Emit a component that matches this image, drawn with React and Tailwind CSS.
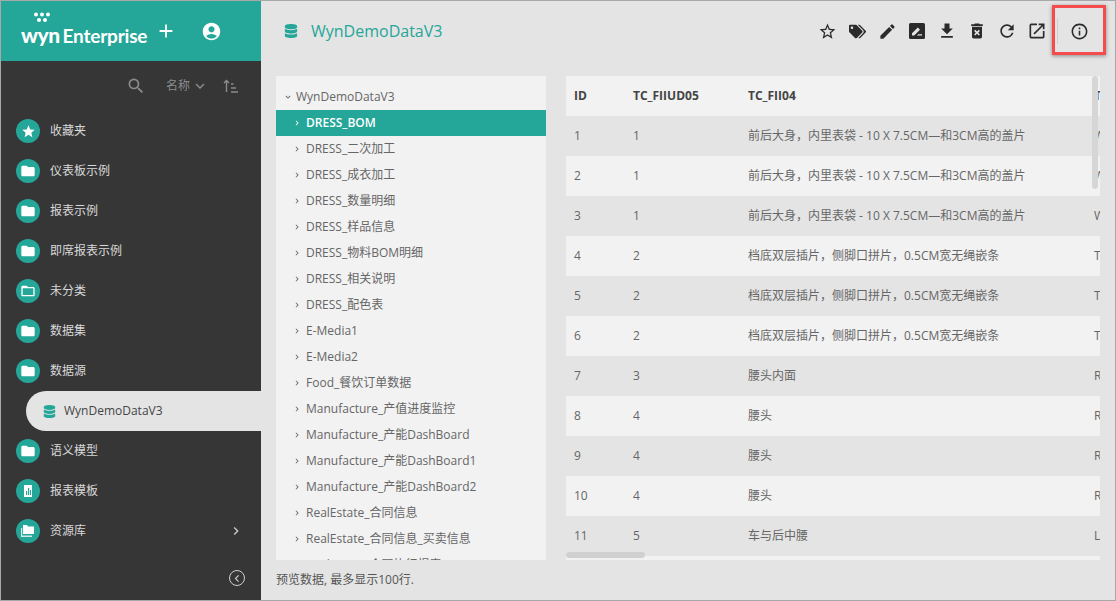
import { MdAdd, MdAccountCircle, MdSearch, MdKeyboardArrowDown, MdKeyboardArrowRight, MdStar, MdFolder, MdFolderOpen, MdStarBorder, MdEdit, MdFileDownload, MdDeleteForever, MdRefresh, MdOpenInNew, MdInfoOutline, MdChevronLeft } from 'react-icons/md';
import { FaDatabase, FaTags } from 'react-icons/fa';

const font = { fontFamily: '"Open Sans", "Noto Sans CJK SC", sans-serif' };

const ReportIcon = () => (
  <svg width="14" height="14" viewBox="0 0 14 14" fill="#fff">
    <path d="M3 1h8v12H3z" />
    <path d="M5 7h1.2v4H5zM7 4h1.2v7H7zM9 6h1v5H9z" fill="#24a698" />
  </svg>
);

const LibIcon = () => (
  <svg width="16" height="14" viewBox="0 0 16 14" fill="#fff">
    <path d="M3 1h4l1 1.5h6V10H3z" />
    <path d="M1 4h1.2v7.5H12V13H1z" opacity="0.8" />
  </svg>
);

const navTop = [
  ['收藏夹', <MdStar size={15} color="#fff" />],
  ['仪表板示例', <MdFolder size={16} color="#fff" />],
  ['报表示例', <MdFolder size={16} color="#fff" />],
  ['即席报表示例', <MdFolder size={16} color="#fff" />],
  ['未分类', <MdFolderOpen size={16} color="#fff" />],
  ['数据集', <MdFolder size={16} color="#fff" />],
  ['数据源', <MdFolder size={16} color="#fff" />],
];

const navBottom = [
  ['语义模型', <MdFolder size={16} color="#fff" />],
  ['报表模板', <ReportIcon />],
  ['资源库', <LibIcon />, true],
];

const tree = [
  'DRESS_BOM', 'DRESS_二次加工', 'DRESS_成衣加工', 'DRESS_数量明细', 'DRESS_样品信息',
  'DRESS_物料BOM明细', 'DRESS_相关说明', 'DRESS_配色表', 'E-Media1', 'E-Media2',
  'Food_餐饮订单数据', 'Manufacture_产值进度监控', 'Manufacture_产能DashBoard',
  'Manufacture_产能DashBoard1', 'Manufacture_产能DashBoard2', 'RealEstate_合同信息',
  'RealEstate_合同信息_买卖信息', 'RealEstate_合同执行报表',
];

const d1 = '前后大身，内里表袋 - 10 X 7.5CM—和3CM高的盖片';
const d2 = '档底双层插片，侧脚口拼片，0.5CM宽无绳嵌条';
const rows = [
  [1, 1, d1, 'W'], [2, 1, d1, 'W'], [3, 1, d1, 'W'],
  [4, 2, d2, 'T'], [5, 2, d2, 'T'], [6, 2, d2, 'T'],
  [7, 3, '腰头内面', 'R'], [8, 4, '腰头', 'R'], [9, 4, '腰头', 'R'], [10, 4, '腰头', 'R'],
  [11, 5, '车与后中腰', 'L'],
];

const NavItem = ({ label, icon, more }) => (
  <div className="h-10 flex items-center pl-[15px] pr-[17px] shrink-0">
    <span className="w-6 h-6 rounded-full bg-[#24a698] flex items-center justify-center shrink-0">{icon}</span>
    <span className="ml-[10px] text-xs text-[#d8d8d8] flex-1">{label}</span>
    {more && <MdKeyboardArrowRight size={16} color="#ccc" />}
  </div>
);

const Sidebar = () => (
  <div className="w-[260px] shrink-0 bg-[#363636] flex flex-col">
    <div className="h-[60px] bg-[#24a698] flex items-center pl-5 pr-[17px] shrink-0">
      <div className="relative w-[121px] h-[40px] text-white">
        <svg className="absolute left-[12px] top-[1px]" width="20" height="12" viewBox="0 0 20 12" fill="#fff">
          <circle cx="3" cy="2.5" r="2" /><circle cx="9" cy="2.5" r="2" /><circle cx="15" cy="2.5" r="2" />
          <circle cx="6" cy="8" r="2" /><circle cx="12" cy="8" r="2" />
        </svg>
        <div className="absolute left-0 top-[12px] flex items-baseline leading-[24px] whitespace-nowrap" style={{ fontFamily: 'Lato, sans-serif' }}>
          <span className="text-[21px] font-black tracking-[-0.5px]">wyn</span>
          <span className="ml-[3px] text-[19px] font-bold tracking-[-0.2px]">Enterprise</span>
        </div>
      </div>
      <MdAdd size={22} color="#fff" className="ml-[13px]" />
      <MdAccountCircle size={21} color="#fff" className="ml-[24px]" />
    </div>
    <div className="h-[50px] flex items-center justify-end pr-[22px] text-[#8b8b8b] shrink-0">
      <MdSearch size={20} />
      <span className="ml-[20px] text-xs">名称</span>
      <MdKeyboardArrowDown size={18} className="ml-[1px]" />
      <svg className="ml-[14px]" width="16" height="14" viewBox="0 0 16 14" fill="none" stroke="#8b8b8b" strokeWidth="1.4">
        <path d="M3.5 13V1.5M1 4l2.5-2.5L6 4M8 5h2.5M8 9h5M8 13h7" />
      </svg>
    </div>
    {navTop.map(([label, icon]) => <NavItem key={label} label={label} icon={icon} />)}
    <div className="h-10 ml-[25px] rounded-l-full bg-[#e4e4e4] flex items-center pl-[17px] shrink-0">
      <FaDatabase size={13} color="#24a698" />
      <span className="ml-[8px] text-xs text-[#444]">WynDemoDataV3</span>
    </div>
    {navBottom.map(([label, icon, more]) => <NavItem key={label} label={label} icon={icon} more={more} />)}
    <div className="flex-1 flex items-center justify-end pr-[16px] pt-[5px]">
      <span className="w-[16px] h-[16px] rounded-full border-[1.5px] border-[#d0d0d0] flex items-center justify-center">
        <MdChevronLeft size={15} color="#d0d0d0" />
      </span>
    </div>
  </div>
);

const EditBoxIcon = () => (
  <svg width="16" height="16" viewBox="0 0 16 16">
    <rect width="16" height="16" rx="1.5" fill="#2b2b2b" />
    <path d="M3 12.5v-2.2l5.8-5.8 2.2 2.2-5.8 5.8zM8 12.5h5v-1.2H9.2z" fill="#e4e4e4" />
  </svg>
);

const Toolbar = () => (
  <div className="flex items-center text-[#2b2b2b]">
    {[
      <MdStarBorder size={19} />, <FaTags size={17} />, <MdEdit size={19} />, <EditBoxIcon />,
      <MdFileDownload size={20} />, <MdDeleteForever size={20} />, <MdRefresh size={20} />, <MdOpenInNew size={20} />,
    ].map((icon, i) => (
      <span key={i} className="w-[30px] h-[30px] flex items-center justify-center">{icon}</span>
    ))}
    <span className="w-px h-[26px] bg-[#cfcfcf] ml-[5px]" />
    <span className="w-[42px] h-[30px] flex items-center justify-center"><MdInfoOutline size={19} /></span>
  </div>
);

const TreePanel = () => (
  <div className="w-[270px] h-[484px] bg-[#f2f2f2] pt-2 overflow-hidden shrink-0">
    <div className="h-[26px] flex items-center pl-[7px] text-xs text-[#666]">
      <MdKeyboardArrowDown size={10} />
      <span className="ml-[3px]">WynDemoDataV3</span>
    </div>
    {tree.map((name, i) => (
      <div key={name} className={`h-[26px] flex items-center pl-[16px] text-xs ${i === 0 ? 'bg-[#24a698] text-white font-semibold' : 'text-[#666]'}`}>
        <MdKeyboardArrowRight size={10} />
        <span className="ml-[4px] whitespace-nowrap">{name}</span>
      </div>
    ))}
  </div>
);

const TablePanel = () => (
  <div className="relative w-[534px] h-[484px] ml-5 bg-[#f2f2f2] overflow-hidden shrink-0 text-xs text-[#666]">
    <div className="h-10 grid grid-cols-[59px_115px_346px_60px] items-center pl-2 font-bold text-[#444]">
      <span>ID</span><span>TC_FIIUD05</span><span>TC_FII04</span><span>T</span>
    </div>
    {rows.map((r, i) => (
      <div key={r[0]} className={`h-10 grid grid-cols-[59px_115px_346px_60px] items-center pl-2 ${i % 2 === 0 ? 'bg-[#e4e4e4]' : 'bg-[#f2f2f2]'}`}>
        <span>{r[0]}</span><span>{r[1]}</span><span>{r[2]}</span><span>{r[3]}</span>
      </div>
    ))}
    <div className="absolute right-[2px] top-0 w-[6px] h-[113px] rounded-full bg-[#d6d6d6]" />
    <div className="absolute left-0 top-[476px] w-[79px] h-[6px] rounded-full bg-[#d0d0d0]" />
  </div>
);

export default function App() {
  return (
    <div className="w-[1116px] h-[601px] flex border border-[#a8a8a8] overflow-hidden relative bg-[#e4e4e4]" style={font}>
      <Sidebar />
      <div className="flex-1 flex flex-col min-w-0">
        <div className="h-[60px] flex items-center pl-[23px] pr-[15px] shrink-0">
          <FaDatabase size={14} color="#24a698" />
          <span className="ml-[13px] text-base text-[#24a698] flex-1">WynDemoDataV3</span>
          <Toolbar />
        </div>
        <div className="flex pl-[15px] pt-[15px]">
          <TreePanel />
          <TablePanel />
        </div>
        <div className="flex-1 flex items-center pl-[15px] text-xs text-[#555]">预览数据, 最多显示100行.</div>
      </div>
      <div className="absolute left-[1051px] top-[4px] w-[54px] h-[50px] border-[3px] border-[#f44b4b] shadow-[0_1px_4px_rgba(0,0,0,0.4)]" />
    </div>
  );
}
